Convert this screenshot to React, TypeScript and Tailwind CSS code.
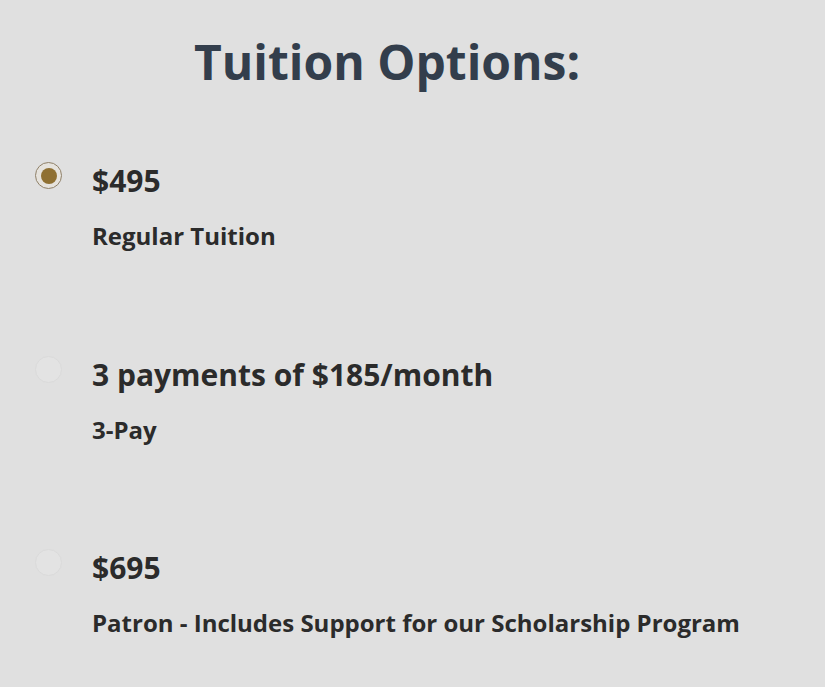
import React from "react";

const options = [
  { price: "$495", label: "Regular Tuition", checked: true },
  { price: "3 payments of $185/month", label: "3-Pay", checked: false },
  { price: "$695", label: "Patron - Includes Support for our Scholarship Program", checked: false },
];

export default function App() {
  return (
    <div
      className="w-[825px] h-[687px] bg-[#e0e0e0] overflow-hidden"
      style={{ fontFamily: '"Open Sans", sans-serif' }}
    >
      <h1 className="pl-[194px] pt-[30px] text-[48px] leading-[64px] font-bold text-[#333e4c]">
        Tuition Options:
      </h1>
      <div className="flex flex-col pt-[68px]">
        {options.map((o, i) => (
          <div key={i} className="flex h-[193.5px]">
            <div className="w-[92px] pl-[35px] pt-0">
              {o.checked ? (
                <div className="w-[27px] h-[27px] rounded-full border border-[#8f8068] bg-[#e6e3dd] flex items-center justify-center">
                  <div className="w-[16px] h-[16px] rounded-full bg-[#8f7032]" />
                </div>
              ) : (
                <div className="w-[27px] h-[27px] rounded-full border border-[#dadada] bg-[#e3e3e3]" />
              )}
            </div>
            <div className="flex flex-col">
              <div className="text-[30px] leading-[38px] font-bold text-[#2b2b2b]">{o.price}</div>
              <div className="mt-[20px] text-[24px] leading-[32px] font-bold text-[#2b2b2b]">{o.label}</div>
            </div>
          </div>
        ))}
      </div>
    </div>
  );
}
